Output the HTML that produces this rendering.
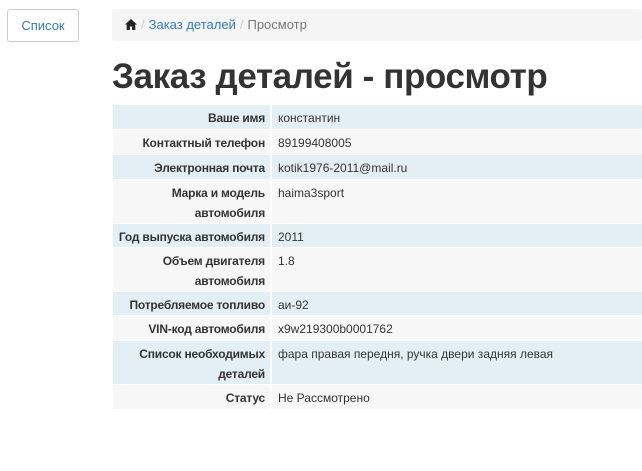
<!DOCTYPE html>
<html><head><meta charset="utf-8"><style>
body{margin:0;width:642px;height:471px;background:#fff;font-family:"Liberation Sans",Arial,sans-serif;color:#333;position:relative;overflow:hidden}
.btn{position:absolute;left:7px;top:9px;width:70px;height:31px;border:1px solid #ccc;border-radius:3px;color:#337ab7;font-size:13px;line-height:31px;text-align:center}
.bc{position:absolute;left:112px;top:9px;width:530px;height:32px;background:#f5f5f5;border-radius:3px;font-size:13px;line-height:31px;color:#777}
.bc a{color:#337ab7}
.sep{color:#ccc;padding:0 4px}
h1{position:absolute;left:112px;top:57px;margin:0;font-size:35px;letter-spacing:-0.4px;font-weight:bold;line-height:40px;color:#333}
table{position:absolute;left:113px;top:104px;width:529px;border-collapse:collapse;font-size:12px}
td{padding:3px 5px 0 6px;vertical-align:top;line-height:20px;border:1px solid #fff;border-left:0;border-right:0}
td.l{width:150px;text-align:right;font-weight:bold;border-right:2px solid #fff;padding-right:5px;padding-left:2px;letter-spacing:-0.2px}
tr.b{background:#e4eff5}tr.g{background:#f7f7f7}
</style></head><body>
<div class="btn">Список</div>
<div class="bc"><span style="margin-left:13px;display:inline-block;vertical-align:-1px"><svg width="12" height="11" viewBox="0 0 12 11"><path d="M6 0L0 5.5h1.7V11h3.2V7.5h2.2V11h3.2V5.5H12z" fill="#222"/></svg></span><span class="sep">/</span><a>Заказ деталей</a><span class="sep">/</span>Просмотр</div>
<h1>Заказ деталей - просмотр</h1>
<table>
<tr class="b" style="height:25px"><td class="l">Ваше имя</td><td>константин</td></tr>
<tr class="g" style="height:25px"><td class="l">Контактный телефон</td><td>89199408005</td></tr>
<tr class="b" style="height:25px"><td class="l">Электронная почта</td><td>kotik1976-2011@mail.ru</td></tr>
<tr class="g" style="height:44px"><td class="l">Марка и модель автомобиля</td><td>haima3sport</td></tr>
<tr class="b" style="height:24px"><td class="l" style="white-space:nowrap">Год выпуска автомобиля</td><td>2011</td></tr>
<tr class="g" style="height:44px"><td class="l">Объем двигателя автомобиля</td><td>1.8</td></tr>
<tr class="b" style="height:24px"><td class="l" style="white-space:nowrap">Потребляемое топливо</td><td>аи-92</td></tr>
<tr class="g" style="height:25px"><td class="l">VIN-код автомобиля</td><td>x9w219300b0001762</td></tr>
<tr class="b" style="height:43px"><td class="l">Список необходимых деталей</td><td>фара правая передня, ручка двери задняя левая</td></tr>
<tr class="g" style="height:25px"><td class="l">Статус</td><td>Не Рассмотрено</td></tr>
</table>
</body></html>
